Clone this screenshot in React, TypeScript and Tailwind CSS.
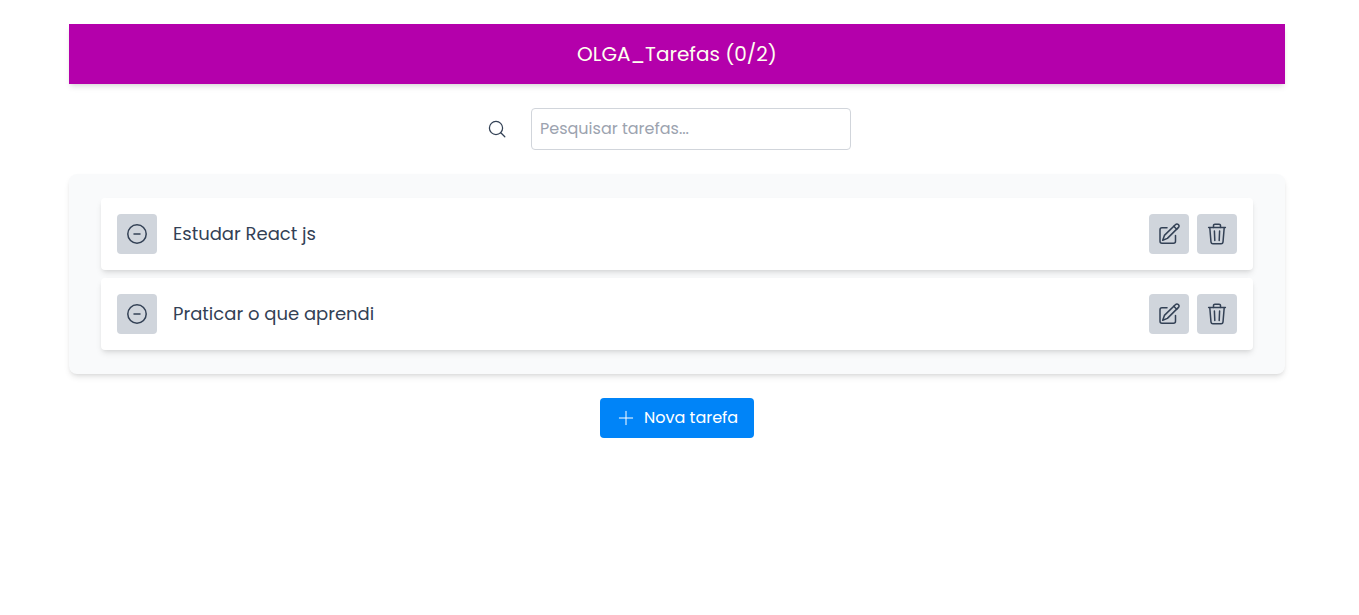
import React from "react";

type IconProps = { className?: string };

const stroke = {
  fill: "none",
  stroke: "currentColor",
  strokeLinecap: "round" as const,
  strokeLinejoin: "round" as const,
};

function SearchIcon({ className }: IconProps) {
  return (
    <svg viewBox="0 0 24 24" className={className} {...stroke} strokeWidth={1.25}>
      <circle cx="11" cy="11" r="6.6" />
      <path d="M15.8 15.8l4 4" />
    </svg>
  );
}

function MinusCircleIcon({ className }: IconProps) {
  return (
    <svg viewBox="0 0 24 24" className={className} {...stroke} strokeWidth={1.5}>
      <circle cx="12" cy="12" r="9.2" />
      <path d="M9 12h6" />
    </svg>
  );
}

function EditIcon({ className }: IconProps) {
  return (
    <svg viewBox="0 0 24 24" className={className} {...stroke} strokeWidth={1.5}>
      <path d="M10 5.7H5a2 2 0 0 0-2 2v11.5a2 2 0 0 0 2 2h11.5a2 2 0 0 0 2-2v-5.7" />
      <path d="M5.7 18.2l1.7-4.8L18.6 2.5a1.9 1.9 0 0 1 2.7 0l.2.2a1.9 1.9 0 0 1 0 2.7L10.4 16.4z" />
      <path d="M16.8 4.3l2.9 2.9" />
    </svg>
  );
}

function TrashIcon({ className }: IconProps) {
  return (
    <svg viewBox="0 0 24 24" className={className} {...stroke} strokeWidth={1.5}>
      <path d="M3.6 5.6h16.8" />
      <path d="M8.5 5.4V3.6A1.4 1.4 0 0 1 9.9 2.2h4.2a1.4 1.4 0 0 1 1.4 1.4v1.8" />
      <path d="M4.8 5.8l1.2 14.3a1.9 1.9 0 0 0 1.9 1.7h8.2a1.9 1.9 0 0 0 1.9-1.7l1.2-14.3" />
      <path d="M9.4 9l.4 9.5M14.6 9l-.4 9.5" />
    </svg>
  );
}

function PlusIcon({ className }: IconProps) {
  return (
    <svg viewBox="0 0 24 24" className={className} {...stroke} strokeWidth={1.2}>
      <path d="M12 4v16M4 12h16" />
    </svg>
  );
}

function IconButton({ label, children }: { label: string; children: React.ReactNode }) {
  return (
    <button
      aria-label={label}
      className="flex size-10 shrink-0 items-center justify-center rounded-[4px] bg-[#d0d5dc]"
    >
      {children}
    </button>
  );
}

const tasks = ["Estudar React js", "Praticar o que aprendi"];

export default function App() {
  return (
    <div className="bg-white pt-6 pl-[69px] font-['Poppins','Inter',sans-serif] text-[#334155]">
      <main className="flex w-[1216px] flex-col gap-6">
        <header className="bg-[#b400ab] py-4 text-center text-xl text-[#fffff0] shadow-md">
          <h1>OLGA_Tarefas (0/2)</h1>
        </header>

        <div className="flex items-center pl-[416px]">
          <SearchIcon className="size-6" />
          <input
            placeholder="Pesquisar tarefas..."
            className="ml-[22px] h-[42px] w-80 rounded-[4px] border border-[#d1d5db] px-2 pt-[7px] pb-[9px] text-base placeholder:text-[#9ca3af]"
          />
        </div>

        <ul className="flex flex-col gap-2 rounded-lg bg-[#f9fafb] px-8 py-6 shadow-md">
          {tasks.map((title) => (
            <li key={title} className="flex items-center rounded-[4px] bg-white p-4 shadow-md">
              <IconButton label="Concluir">
                <MinusCircleIcon className="size-6" />
              </IconButton>
              <span className="ml-4 grow text-lg">{title}</span>
              <div className="flex gap-2">
                <IconButton label="Editar">
                  <EditIcon className="size-6" />
                </IconButton>
                <IconButton label="Excluir">
                  <TrashIcon className="size-6" />
                </IconButton>
              </div>
            </li>
          ))}
        </ul>

        <button className="flex h-10 w-[154px] items-center self-center rounded-[4px] bg-[#0084f8] pl-4 text-white">
          <PlusIcon className="mr-2 size-5" />
          <span className="whitespace-nowrap">Nova tarefa</span>
        </button>
      </main>
    </div>
  );
}
